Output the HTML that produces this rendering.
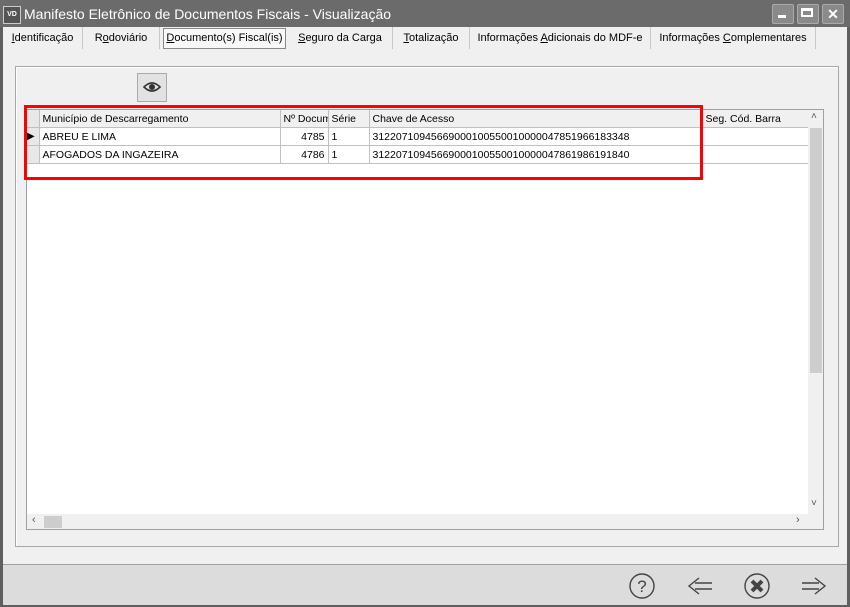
<!DOCTYPE html><html><head><style>
body{margin:0;width:850px;height:607px;overflow:hidden;background:#5f5f5f;font-family:"Liberation Sans",sans-serif;position:relative}
.a{position:absolute}
.tab{position:absolute;top:27px;height:22px;line-height:22px;font-size:11px;border-right:1px solid #c8c8c8;white-space:nowrap;text-align:center}
td{font-size:10.5px;padding:0 3px;height:17px;border-right:1px solid #c0c0c0;border-bottom:1px solid #c0c0c0;white-space:nowrap;overflow:hidden}
table{border-collapse:collapse;table-layout:fixed;background:#fff}
</style></head><body>
<div class="a" style="left:0;top:0;width:850px;height:27px;background:#6b6b6b"></div>
<div class="a" style="left:3px;top:6px;width:16px;height:16px;background:#555;border:1px solid #ccc;color:#fff;font-size:7px;line-height:16px;text-align:center;font-weight:bold">VD</div>
<div class="a" style="left:24px;top:6px;color:#fff;font-size:14px;white-space:nowrap">Manifesto Eletrônico de Documentos Fiscais - Visualização</div>
<div class="a" style="left:772px;top:4px;width:20px;height:18px;background:#8a8a8a;border:1px solid #aaa;border-radius:2px"></div>
<div class="a" style="left:797px;top:4px;width:20px;height:18px;background:#8a8a8a;border:1px solid #aaa;border-radius:2px"></div>
<div class="a" style="left:822px;top:4px;width:20px;height:18px;background:#8a8a8a;border:1px solid #aaa;border-radius:2px;color:#fff;font-size:14px;text-align:center;line-height:18px;font-weight:bold">✕</div>
<div class="a" style="left:778px;top:15px;width:8px;height:3px;background:#fff"></div>
<div class="a" style="left:801px;top:8px;width:12px;height:9px;border:2px solid #fff;border-top-width:3px;box-sizing:border-box"></div>
<div class="a" style="left:3px;top:27px;width:844px;height:537px;background:#f0f0f0"></div>
<div class="a" style="left:3px;top:564px;width:844px;height:40px;background:#dcdcdc;border-top:1px solid #a0a0a0"></div>
<div class="tab" style="left:3px;width:79px"><u>I</u>dentificação</div>
<div class="tab" style="left:83px;width:76px">R<u>o</u>doviário</div>
<div class="a" style="left:163px;top:28px;width:121px;height:19px;border:1px solid #888;background:#f8f8f8;font-size:11px;line-height:19px;text-align:center;white-space:nowrap"><u>D</u>ocumento(s) Fiscal(is)</div>
<div class="tab" style="left:288px;width:104px"><u>S</u>eguro da Carga</div>
<div class="tab" style="left:393px;width:76px"><u>T</u>otalização</div>
<div class="tab" style="left:470px;width:180px">Informações <u>A</u>dicionais do MDF-e</div>
<div class="tab" style="left:651px;width:164px">Informações <u>C</u>omplementares</div>
<div class="a" style="left:15px;top:66px;width:822px;height:479px;border:1px solid #a8a8a8;box-shadow:inset 1px 1px #fff"></div>
<div class="a" style="left:137px;top:73px;width:30px;height:29px;background:#e2e2e2;border:1px solid #aaa;box-sizing:border-box"></div>
<svg class="a" style="left:143px;top:80px" width="18" height="14"><path d="M1 7Q9 -1 17 7Q9 15 1 7Z" fill="none" stroke="#333" stroke-width="1.6"/><circle cx="9" cy="7" r="3" fill="#333"/></svg>
<div class="a" style="left:26px;top:109px;width:798px;height:421px;background:#fff;border:1px solid #a0a0a0;box-sizing:border-box"></div>
<table class="a" style="left:27px;top:110px;width:781px">
<colgroup><col style="width:12px"><col style="width:241px"><col style="width:48px"><col style="width:41px"><col style="width:333px"><col style="width:106px"></colgroup>
<tr style="background:#f0f0f0"><td style="background:#e8e8e8"></td><td>Município de Descarregamento</td><td>Nº Documento</td><td>Série</td><td>Chave de Acesso</td><td>Seg. Cód. Barra</td></tr>
<tr><td style="background:#e8e8e8;padding:0;font-size:10px;border-top:1px solid #000">▶</td><td style="border-top:1px solid #000">ABREU E LIMA</td><td style="text-align:right;border-top:1px solid #000">4785</td><td style="border-top:1px solid #000">1</td><td style="border-top:1px solid #000">31220710945669000100550010000047851966183348</td><td style="border-top:1px solid #000"></td></tr>
<tr><td style="background:#e8e8e8"></td><td>AFOGADOS DA INGAZEIRA</td><td style="text-align:right">4786</td><td>1</td><td>31220710945669000100550010000047861986191840</td><td></td></tr>
</table>
<div class="a" style="left:808px;top:110px;width:15px;height:404px;background:#f0f0f0"></div>
<div class="a" style="left:810px;top:128px;width:12px;height:245px;background:#cdcdcd"></div>
<div class="a" style="left:811px;top:111px;font-size:10px;color:#555">˄</div>
<div class="a" style="left:811px;top:498px;font-size:10px;color:#555">˅</div>
<div class="a" style="left:27px;top:514px;width:796px;height:15px;background:#f0f0f0"></div>
<div class="a" style="left:44px;top:516px;width:18px;height:12px;background:#cdcdcd"></div>
<div class="a" style="left:32px;top:514px;font-size:11px;color:#555">‹</div>
<div class="a" style="left:796px;top:514px;font-size:11px;color:#555">›</div>
<div class="a" style="left:24px;top:105px;width:679px;height:75px;border:3px solid #f00;box-sizing:border-box"></div>
<svg class="a" style="left:628px;top:572px" width="220" height="28" fill="none" stroke="#444" stroke-width="1.4">
<circle cx="14" cy="14" r="12"/><text x="14" y="20" font-size="17" text-anchor="middle" fill="#444" stroke="none" font-family="Liberation Sans">?</text>
<path d="M84 11H67M84 17H67M71 6L61 14L71 22"/>
<circle cx="129" cy="14" r="12"/><path d="M124 9L134 19M134 9L124 19" stroke-width="4"/>
<path d="M174 11H191M174 17H191M187 6L197 14L187 22"/>
</svg>
</body></html>
